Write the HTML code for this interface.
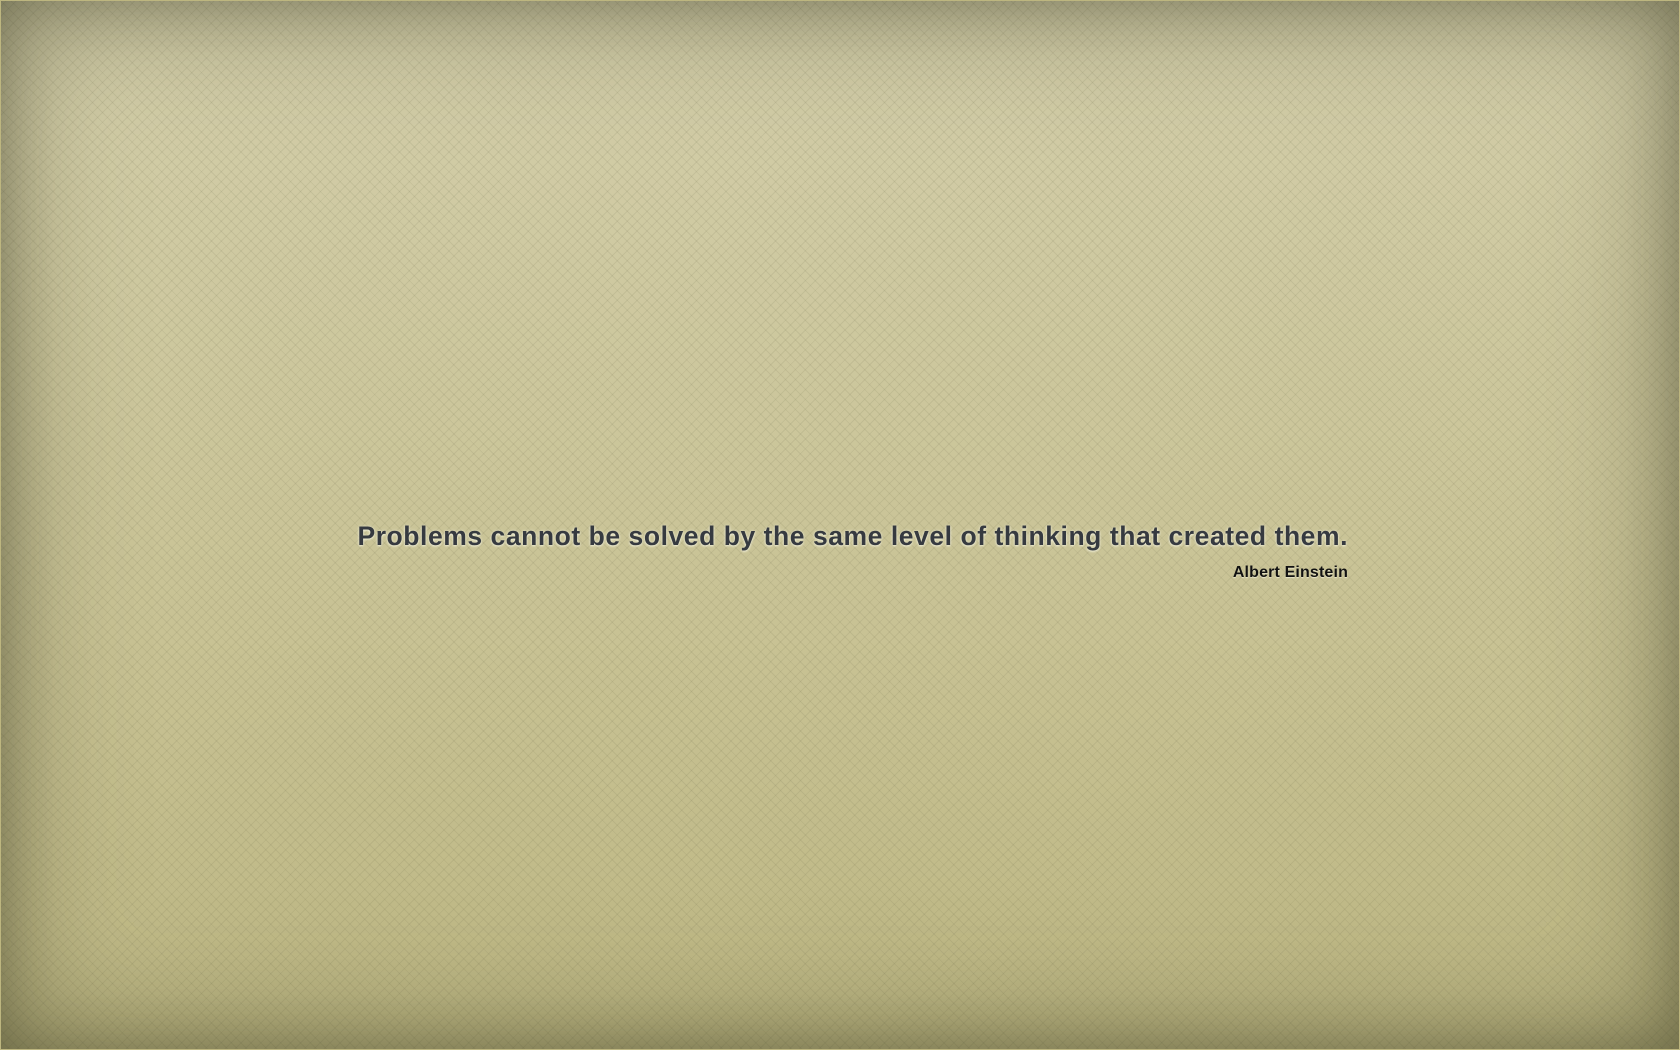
<!DOCTYPE html>
<html><head><meta charset="utf-8"><style>
html,body{margin:0;padding:0;width:1680px;height:1050px;overflow:hidden}
body{position:relative;background:#cdc79c;font-family:"Liberation Sans",sans-serif}
.bg{position:absolute;inset:0;background:linear-gradient(#d3ceaa,#c8c294 60%,#bcb682)}
.pat{position:absolute;inset:0;background-image:
repeating-linear-gradient(45deg,rgba(90,90,60,.10) 0 1px,transparent 1px 7px),
repeating-linear-gradient(-45deg,rgba(90,90,60,.10) 0 1px,transparent 1px 7px)}
.vig{position:absolute;inset:0;box-shadow:inset 0 0 170px rgba(60,60,35,.55)}
.vig2{position:absolute;inset:0;box-shadow:inset 0 0 50px rgba(60,60,35,.3)}
.border{position:absolute;inset:0;border:1px solid #bdb67f}
.q{position:absolute;right:332px;top:521px;font-weight:bold;font-size:26.5px;letter-spacing:0.55px;color:#363a40;white-space:nowrap;text-shadow:0 1px 2px rgba(255,255,240,.7),0 0 3px rgba(255,255,240,.5)}
.a{position:absolute;right:332px;top:564px;font-weight:bold;font-size:16px;letter-spacing:0.15px;color:#111;white-space:nowrap;text-shadow:0 1px 1px rgba(255,255,240,.6)}
</style></head><body>
<div class="bg"></div><div class="pat"></div><div class="vig"></div><div class="vig2"></div><div class="border"></div>
<div class="q">Problems cannot be solved by the same level of thinking that created them.</div>
<div class="a">Albert Einstein</div>
</body></html>
